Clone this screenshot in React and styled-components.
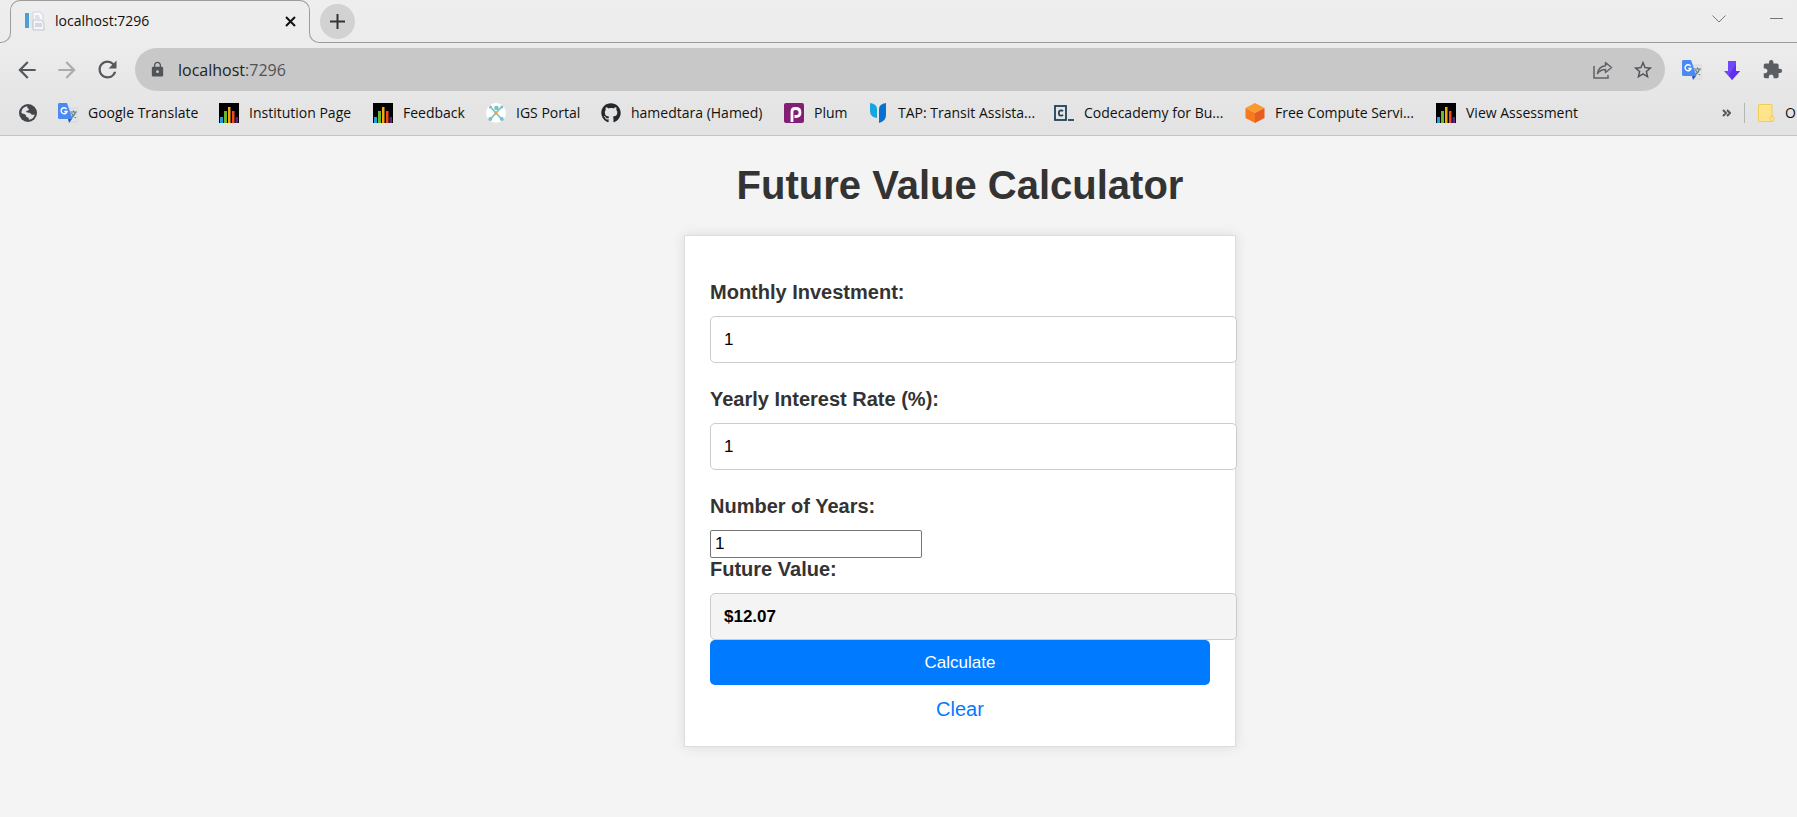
import React, { useState } from "react";
import styled, { createGlobalStyle } from "styled-components";
import { FaGithub } from "react-icons/fa";
import { MdArrowBack, MdArrowForward, MdRefresh, MdLock, MdStarBorder, MdExtension } from "react-icons/md";

const ui = `"Segoe UI", "Open Sans", "Noto Sans", sans-serif`;
const line = "#9c9c9c";

const GlobalStyle = createGlobalStyle`
  * { box-sizing: border-box; }
  html { background: #f4f4f4; }
  body { margin: 0; overflow-x: hidden; font-family: Arial, "Liberation Sans", sans-serif; }
  button { font: inherit; color: inherit; background: none; border: 0; padding: 0; cursor: pointer; }
  svg { display: block; flex: none; }
`;

/* ---------- browser frame ---------- */

const Chrome = styled.header`
  background: linear-gradient(#eeeeee 0, #ececec 48px, #e4e4e4 112px, #e3e3e3 100%);
  border-bottom: 1px solid #c4c4c4;
  font-family: ${ui};
  color: #111;
`;

const TabStrip = styled.div`
  display: flex;
  align-items: flex-end;
  height: 43px;
`;

const StripEdge = styled.div`
  height: 12px;
  border-bottom: 1px solid ${line};
`;

const LeftEdge = styled(StripEdge)`
  width: 11px;
  border-right: 1px solid ${line};
  border-bottom-right-radius: 10px;
`;

const RightEdge = styled(StripEdge)`
  flex: 1;
  margin-left: -1px;
  border-left: 1px solid ${line};
  border-bottom-left-radius: 10px;
`;

const StripRest = styled.div`
  flex: 1;
  display: flex;
  align-items: flex-end;
  height: 100%;
  position: relative;
`;

const StripControls = styled.div`
  position: absolute;
  inset: 0;
  display: flex;
  align-items: center;
  justify-content: space-between;
  padding: 0 14px 1px 10px;
`;

const WindowControls = styled.div`
  display: flex;
  align-items: center;
  gap: 44px;
  padding-bottom: 5px;
`;

const Tab = styled.div`
  position: relative;
  display: flex;
  align-items: center;
  width: 300px;
  height: 100%;
  margin-left: -1px;
  padding: 0 14px 1px 15px;
  &::before {
    content: "";
    position: absolute;
    inset: 0 0 12px;
    border: 1px solid ${line};
    border-bottom: 0;
    border-radius: 10px 10px 0 0;
    pointer-events: none;
  }
`;

const TabTitle = styled.span`
  flex: 1;
  margin-left: 10px;
  font-size: 14px;
  line-height: 20px;
`;

const NewTab = styled.button`
  display: grid;
  place-items: center;
  width: 35px;
  height: 35px;
  border-radius: 50%;
  background: #d2d2d2;
`;

const Toolbar = styled.div`
  display: flex;
  align-items: center;
  padding: 5px 0 0;
`;

const NavButtons = styled.nav`
  display: flex;
  align-items: center;
  gap: 14px;
  width: 135px;
  padding-left: 14px;
  color: #55585c;
`;

const NavButton = styled.button`
  opacity: ${(p) => (p.disabled ? 0.42 : 1)};
`;

const AddressBar = styled.div`
  flex: 1;
  display: flex;
  align-items: center;
  height: 43px;
  padding: 0 11px 0 14px;
  border-radius: 22px;
  background: #c8c8c8;
  color: #505357;
`;

const Address = styled.span`
  flex: 1;
  margin-left: 12px;
  font-size: 16px;
  line-height: 24px;
  b { font-weight: 400; color: #222; }
`;

const AddressActions = styled.div`
  display: flex;
  align-items: center;
  gap: 19px;
`;

const Extensions = styled.div`
  display: flex;
  align-items: center;
  gap: 20px;
  width: 132px;
  padding-left: 17px;
  color: #5a5d61;
`;

const BookmarkBar = styled.nav`
  display: flex;
  align-items: center;
  height: 44px;
  padding-left: 18px;
  overflow: hidden;
`;

const Bookmark = styled.a`
  display: flex;
  align-items: center;
  flex: none;
  gap: 10px;
  width: ${(p) => p.$width}px;
  font-size: 14px;
  line-height: 20px;
  white-space: nowrap;
  color: inherit;
  text-decoration: none;
`;

const BookmarkTail = styled.div`
  display: flex;
  align-items: center;
  flex: none;
  width: 75px;
  margin-left: auto;
  overflow: hidden;
`;

const Divider = styled.span`
  flex: none;
  width: 1px;
  height: 20px;
  margin: 0 13px;
  background: #b4b4b4;
`;

/* ---------- page ---------- */

const Page = styled.main`
  display: flex;
  flex-direction: column;
  align-items: center;
  padding: 26px 0 40px 123px;
  color: #333;
`;

const Title = styled.h1`
  margin: 0 0 27px;
  font-size: 40px;
  line-height: 46px;
`;

const Card = styled.form`
  display: flex;
  flex-direction: column;
  align-items: stretch;
  width: 100%;
  max-width: 552px;
  padding: 45px 25px 25px;
  background: #fff;
  border: 1px solid #ddd;
  box-shadow: 0 0 12px rgba(0, 0, 0, 0.1);
`;

const Field = styled.div`
  margin-bottom: ${(p) => (p.$tight ? 0 : 25)}px;
`;

const Label = styled.label`
  display: block;
  margin-bottom: 13px;
  font-size: 20px;
  line-height: 22px;
  font-weight: 700;
`;

const Input = styled.input`
  display: block;
  width: calc(100% + 27px);
  height: 47px;
  padding: 0 13px;
  border: 1px solid #ccc;
  border-radius: 5px;
  background: #fff;
  color: #000;
  font-family: inherit;
  font-size: 17px;
`;

const ResultInput = styled(Input)`
  background: #f4f4f4;
  font-weight: 700;
`;

const PlainInput = styled(Input)`
  width: 212px;
  height: 28px;
  padding: 0 4px;
  border-color: #767676;
  border-radius: 2px;
`;

const Calculate = styled.button`
  height: 45px;
  border-radius: 5px;
  background: #007bff;
  color: #fff;
  font-size: 17px;
`;

const Clear = styled.a`
  align-self: center;
  margin-top: 13px;
  font-size: 20px;
  line-height: 23px;
  color: #007bff;
  text-decoration: none;
`;

/* ---------- icons ---------- */

const PageIcon = () => (
  <svg width="20" height="20" viewBox="0 0 20 20">
    <rect x="0" y="2" width="4" height="15" fill="#4aa0d2" />
    <path d="M5 2h2v15H5z" fill="#dfe7ee" />
    <path d="M8 1h7l3 3v13H8z" fill="#f7f9fb" stroke="#cdd4dd" />
    <path d="M10 5h4M10 7h5" stroke="#c3cad4" />
    <path d="M8 9h8l3 3v7H8z" fill="#f4f5f8" stroke="#c0c5cf" />
    <path d="M10 13h7M10 15h7" stroke="#b4bac6" />
  </svg>
);

const TranslateIcon = () => (
  <svg width="20" height="20" viewBox="0 0 20 20">
    <path d="M8 5h11q1 0 1 1v12q0 1-1 1h-7z" fill="#e2e4e6" stroke="#cfd1d3" strokeWidth=".6" />
    <path d="M12 9h7M15.5 7.500v1.500M17.500 9q-1 4-5 6M13.500 10q1.500 3.500 4.500 5" fill="none" stroke="#667c85" strokeWidth="1.200" />
    <path d="M10 16h4l-3 4z" fill="#2f50b5" />
    <path d="M1 0h8l5.500 16H1.500Q0 16 0 14.500V1.500Q0 0 1 0z" fill="#4a8af4" />
    <path d="M8.600 6.100A3 3 0 1 0 9 8.500H6.300" fill="none" stroke="#fff" strokeWidth="1.400" />
  </svg>
);

const BarsIcon = () => (
  <svg width="20" height="20" viewBox="0 0 20 20">
    <path fill="#000" d="M0 0h20v20H0z" />
    <path fill="#1b9fe0" d="M1 14h3v6H1z" />
    <path fill="#6cb52d" d="M5 8h3v12H5z" />
    <path fill="#f7a80d" d="M9 4h2.500v16H9z" />
    <path fill="#ee4a23" d="M13 8h2.500v12H13z" />
    <path fill="#5a2487" d="M16.500 14H19v6h-2.500z" />
  </svg>
);

const GlobeIcon = () => (
  <svg width="20" height="20" viewBox="0 0 20 20">
    <circle cx="10" cy="10" r="9" fill="#43464a" />
    <path d="M3.500 10C3.200 6.500 6 3.500 9.500 3.300 9 4.500 9.200 5.500 11 5.800 11 7.600 9.800 7.600 8.200 8 8 9.300 9 9.600 10.800 9.700c2 .1 1.800 1.500 3.200 2 1 .3 2 .2 2.800-.3-.5 3-3 5.100-6 5.300.2-1.500-.3-2.200-1.600-2.400-1.500-.3-.8-2.300-2-2.900C5.800 11 4.500 10.800 3.500 10z" fill="#e4e4e4" />
  </svg>
);

const PortalIcon = () => (
  <svg width="20" height="20" viewBox="0 0 20 20">
    <circle cx="10" cy="10" r="10" fill="#fff" />
    <path d="M5 4.500l10 11M15 4.500L5 15.500" stroke="#7cc0c4" strokeWidth="1.700" />
    <g fill="#7cc0c4">
      <circle cx="10.500" cy="5" r="2.300" />
      <circle cx="4.500" cy="4" r="1.500" />
      <circle cx="15.800" cy="4" r="1.500" />
      <circle cx="4.300" cy="16" r="2" />
      <circle cx="15.800" cy="16" r="2" />
    </g>
    <circle cx="9.800" cy="10" r="1.500" fill="#f39a35" />
  </svg>
);

const PlumIcon = () => (
  <svg width="20" height="20" viewBox="0 0 20 20">
    <rect width="20" height="20" rx="2" fill="#821e74" />
    <path d="M8 19V8.500Q8 5.500 11 5.500h1Q16 5.500 16 9.500T12 13.500h-1.500" fill="none" stroke="#fff" strokeWidth="2.800" />
  </svg>
);

const TapIcon = () => (
  <svg width="20" height="20" viewBox="0 0 20 20">
    <path d="M2 0q7 1 7 6v9q-7-1-7-7z" fill="#14a6e0" />
    <path d="M18 0q-7 1-7 6v14q7-2 7-8z" fill="#0a6fcd" />
  </svg>
);

const CodeIcon = () => (
  <svg width="20" height="20" viewBox="0 0 20 20" fill="none" stroke="#1f4058">
    <rect x="1" y="3" width="11" height="14" strokeWidth="1.800" />
    <path d="M9 8.300Q8.300 7.300 7 7.300 4.800 7.300 4.800 10T7 12.700Q8.300 12.700 9 11.700" strokeWidth="1.700" />
    <path d="M14 17h6" strokeWidth="1.800" />
  </svg>
);

const CubeIcon = () => (
  <svg width="20" height="20" viewBox="0 0 20 20">
    <path d="M10 0l9.500 5L10 10 .5 5z" fill="#fb9a2c" />
    <path d="M.5 5L10 10v10L.5 15z" fill="#f6791f" />
    <path d="M19.500 5L10 10v10l9.500-5z" fill="#ea5d20" />
  </svg>
);

const FolderIcon = () => (
  <svg width="17" height="19" viewBox="0 0 17 19">
    <path d="M.5 1Q.5.500 1 .5h12.500q.5 0 .5.500v11.500q1.500-.8 2 .8v2.200q0 2-2 2H1q-.5 0-.5-.5z" fill="#ffe48b" stroke="#efce58" />
    <path d="M14 12.500q-2 .2-2 2t2 2.500" fill="none" stroke="#efce58" />
  </svg>
);

const ShareIcon = () => (
  <svg width="20" height="18" viewBox="0 0 20 18" fill="none" stroke="#5f6266" strokeWidth="1.500">
    <path d="M1 5v12h14v-3" />
    <path d="M12.500 1.500L18.500 6.500l-6 5V8.500Q7.500 8.500 4.500 12.500 5.500 5.500 12.500 4.700z" strokeLinejoin="round" />
  </svg>
);

const DownloadIcon = () => (
  <svg width="20" height="20" viewBox="0 0 20 20">
    <path d="M6 1h8v10h4l-8 9-8-9h4z" fill="#7446fa" />
    <path d="M14 4v7h4l-8 9-3-5z" fill="#6130ee" />
  </svg>
);

const StrokeIcon = ({ w, h, d, color = "#111", stroke = 2 }) => (
  <svg width={w} height={h} viewBox={`0 0 ${w} ${h}`} fill="none" stroke={color} strokeWidth={stroke}>
    <path d={d} />
  </svg>
);

const bookmarks = [
  { icon: <TranslateIcon />, text: "Google Translate", width: 161 },
  { icon: <BarsIcon />, text: "Institution Page", width: 154 },
  { icon: <BarsIcon />, text: "Feedback", width: 113 },
  { icon: <PortalIcon />, text: "IGS Portal", width: 115 },
  { icon: <FaGithub size={20} color="#24292e" />, text: "hamedtara (Hamed)", width: 183 },
  { icon: <PlumIcon />, text: "Plum", width: 84 },
  { icon: <TapIcon />, text: "TAP: Transit Assista...", width: 186 },
  { icon: <CodeIcon />, text: "Codecademy for Bu...", width: 191 },
  { icon: <CubeIcon />, text: "Free Compute Servi...", width: 191 },
  { icon: <BarsIcon />, text: "View Assessment", width: 154 },
];

export default function App() {
  const [monthly, setMonthly] = useState("1");
  const [rate, setRate] = useState("1");
  const [years, setYears] = useState("1");

  return (
    <>
      <GlobalStyle />
      <Chrome>
        <TabStrip>
          <LeftEdge />
          <Tab>
            <PageIcon />
            <TabTitle>localhost:7296</TabTitle>
            <button type="button" aria-label="Close tab">
              <StrokeIcon w={11} h={11} d="M1 1l9 9M10 1l-9 9" />
            </button>
          </Tab>
          <StripRest>
            <RightEdge />
            <StripControls>
              <NewTab type="button" aria-label="New tab">
                <StrokeIcon w={15} h={15} d="M7.500 0v15M0 7.500h15" color="#333" />
              </NewTab>
              <WindowControls>
                <button type="button" aria-label="Search tabs">
                  <StrokeIcon w={14} h={8} d="M.5.500l6.500 6.500 6.500-6.500" color="#777" stroke={1} />
                </button>
                <button type="button" aria-label="Minimize">
                  <StrokeIcon w={13} h={1} d="M0 .5h13" color="#777" stroke={1} />
                </button>
              </WindowControls>
            </StripControls>
          </StripRest>
        </TabStrip>

        <Toolbar>
          <NavButtons aria-label="History">
            <NavButton type="button" aria-label="Back"><MdArrowBack size={26} /></NavButton>
            <NavButton type="button" aria-label="Forward" disabled><MdArrowForward size={26} /></NavButton>
            <NavButton type="button" aria-label="Reload"><MdRefresh size={27} /></NavButton>
          </NavButtons>
          <AddressBar>
            <MdLock size={17} />
            <Address><b>localhost</b>:7296</Address>
            <AddressActions>
              <button type="button" aria-label="Share"><ShareIcon /></button>
              <button type="button" aria-label="Bookmark this page"><MdStarBorder size={22} /></button>
            </AddressActions>
          </AddressBar>
          <Extensions>
            <button type="button" aria-label="Translate"><TranslateIcon /></button>
            <button type="button" aria-label="Downloader"><DownloadIcon /></button>
            <button type="button" aria-label="Extensions"><MdExtension size={21} /></button>
          </Extensions>
        </Toolbar>

        <BookmarkBar aria-label="Bookmarks">
          <Bookmark href="#" $width={40} aria-label="Home"><GlobeIcon /></Bookmark>
          {bookmarks.map((b) => (
            <Bookmark key={b.text} href="#" $width={b.width}>
              {b.icon}
              {b.text}
            </Bookmark>
          ))}
          <BookmarkTail>
            <button type="button" aria-label="More bookmarks">
              <StrokeIcon w={9} h={8} d="M1 1l3 3-3 3M5 1l3 3-3 3" color="#55585c" />
            </button>
            <Divider />
            <Bookmark href="#" $width={60}>
              <FolderIcon />
              O
            </Bookmark>
          </BookmarkTail>
        </BookmarkBar>
      </Chrome>

      <Page>
        <Title>Future Value Calculator</Title>
        <Card onSubmit={(e) => e.preventDefault()}>
          <Field>
            <Label htmlFor="monthly">Monthly Investment:</Label>
            <Input id="monthly" value={monthly} onChange={(e) => setMonthly(e.target.value)} />
          </Field>
          <Field>
            <Label htmlFor="rate">Yearly Interest Rate (%):</Label>
            <Input id="rate" value={rate} onChange={(e) => setRate(e.target.value)} />
          </Field>
          <Field $tight>
            <Label htmlFor="years">Number of Years:</Label>
            <PlainInput id="years" value={years} onChange={(e) => setYears(e.target.value)} />
          </Field>
          <Field $tight>
            <Label htmlFor="future">Future Value:</Label>
            <ResultInput id="future" value="$12.07" readOnly />
          </Field>
          <Calculate type="submit">Calculate</Calculate>
          <Clear href="#">Clear</Clear>
        </Card>
      </Page>
    </>
  );
}
